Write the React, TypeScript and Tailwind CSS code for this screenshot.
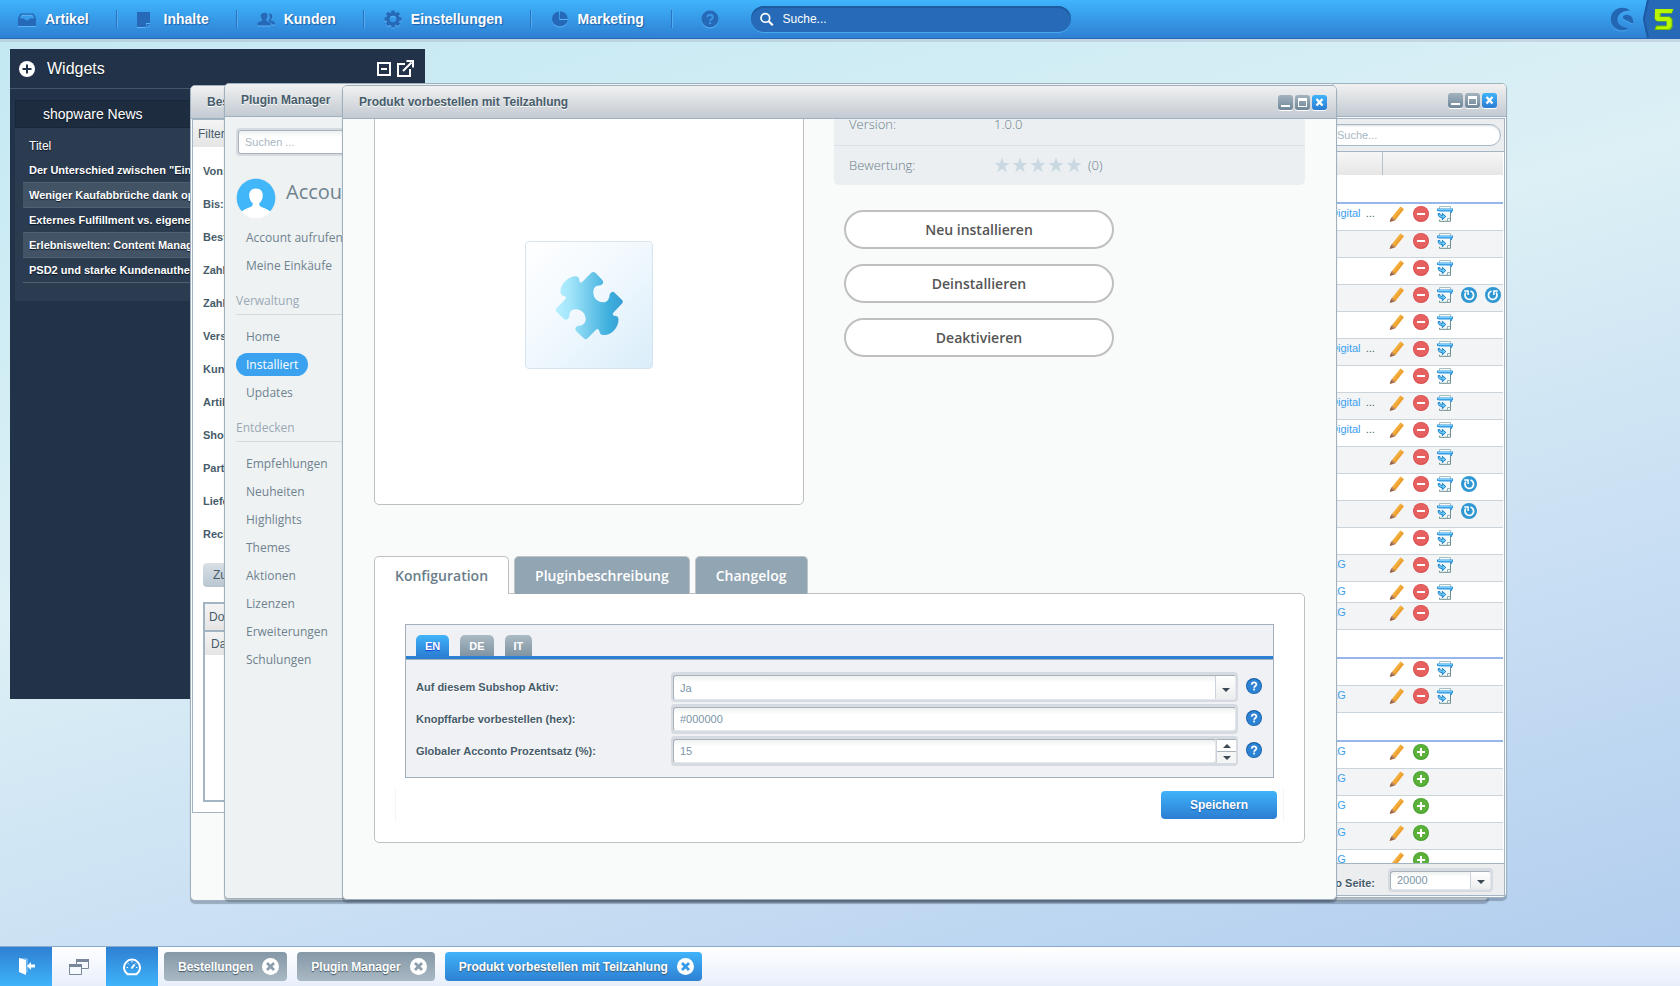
import React from 'react';

const titleShadow = '[text-shadow:0_1px_0_#ffffff]';

function Emboss({ children, className = '' }: { children: React.ReactNode; className?: string }) {
  return (
    <svg
      viewBox="0 0 18 18"
      aria-hidden="true"
      className={`h-[18px] w-[18px] shrink-0 text-[#2569b8] drop-shadow-[0_1px_0_#5cb5f5] ${className}`}
    >
      {children}
    </svg>
  );
}

const InboxIcon = () => (
  <Emboss>
    <path
      fill="currentColor"
      fillRule="evenodd"
      d="M2.500 3.500h13L18 8v8H0V8l2.500-4.500Zm1.200 1.200L1.800 8.400h4.600c.2 1.200 1.200 1.900 2.600 1.900s2.400-.7 2.600-1.900h4.600l-1.900-3.700H3.700Z"
    />
  </Emboss>
);

const PageIcon = () => (
  <Emboss>
    <path fill="currentColor" d="M0 2h13v11H9v4H0Z" />
    <path fill="currentColor" d="M10 14h3l-3 3Z" />
  </Emboss>
);

const UsersIcon = () => (
  <Emboss>
    <path
      fill="currentColor"
      d="M12.500 3.500c2 0 2.900 1.300 2.900 2.900 0 1.300-.6 2.500-1.200 3.100v1l3 1.300c.6.3.8.9.8 1.700v.9h-3.300c-.1-1.300-.6-1.900-1.700-2.400l-1.800-.9c1-1.200 1.500-2.500 1.500-4.200 0-1.400-.4-2.300-1.200-3.200.3-.1.600-.2 1-.2Z"
    />
    <path
      fill="currentColor"
      d="M7.500 2.800c2.200 0 3.200 1.500 3.200 3.300 0 1.500-.7 2.900-1.400 3.500v1.200l3.500 1.500c.8.4 1 1 1 1.900v1.300H.300v-1.300c0-.9.300-1.500 1-1.900l3.600-1.500V9.600C4.300 9 3.600 7.600 3.600 6.100c0-1.800 1.700-3.300 3.900-3.300Z"
    />
  </Emboss>
);

const teeth = [0, 45, 90, 135, 180, 225, 270, 315];

const GearIcon = () => (
  <Emboss>
    <circle cx="9" cy="9" r="5" fill="none" stroke="currentColor" strokeWidth="3.400" />
    {teeth.map((a) => (
      <rect key={a} x="7.200" y="0.500" width="3.600" height="3.500" rx="0.500" fill="currentColor" transform={`rotate(${a} 9 9)`} />
    ))}
  </Emboss>
);

const PieIcon = () => (
  <Emboss>
    <path fill="currentColor" d="M8 1.500v8.500h8.800A8 7.500 0 1 1 8 1.500Z" />
    <path fill="currentColor" d="M9 1.200a8 8 0 0 1 7.700 7.800H9Z" />
  </Emboss>
);

const nav = [
  { label: 'Artikel', icon: <InboxIcon /> },
  { label: 'Inhalte', icon: <PageIcon /> },
  { label: 'Kunden', icon: <UsersIcon /> },
  { label: 'Einstellungen', icon: <GearIcon /> },
  { label: 'Marketing', icon: <PieIcon /> },
];

function Header() {
  return (
    <header className="relative z-10 flex h-[39px] shrink-0 items-stretch border-b border-[#2767b4] bg-linear-to-b from-[#40b4fc] to-[#2e80d3] shadow-[0_3px_0_rgba(160,170,190,0.350)]">
      <nav className="flex items-center" aria-label="Hauptmenü">
        {nav.map((item) => (
          <React.Fragment key={item.label}>
            <button
              type="button"
              className="flex h-[38px] items-center gap-[9px] pr-[27px] pl-5 text-[14px] leading-5 font-bold text-white [text-shadow:1px_1px_1px_#1f5ea8] first:pl-[18px]"
            >
              {item.icon}
              {item.label}
            </button>
            <span className="h-[18px] w-px bg-[#2a73c0] shadow-[1px_0_0_#52acf0]" />
          </React.Fragment>
        ))}
      </nav>
      <button type="button" aria-label="Hilfe" className="flex items-center pr-8 pl-[29px]">
        <Emboss>
          <circle cx="9" cy="9" r="8.500" fill="currentColor" />
          <path d="M6.400 7.200c0-3.400 5.400-3.200 5.400 0 0 2-2.700 2-2.700 3.900" fill="none" stroke="#3c97e6" strokeWidth="2" />
          <rect x="8" y="12.200" width="2.200" height="2" fill="#3c97e6" />
        </Emboss>
      </button>
      <label className="my-[6px] flex w-[320px] items-center gap-[9px] rounded-full bg-[#276bb8] pl-[9px] shadow-[inset_0_2px_1px_#1f5a9e,0_1px_0_#4ba6ef]">
        <svg viewBox="0 0 15 15" className="h-[15px] w-[15px]" fill="none" stroke="#fff" strokeWidth="1.800" aria-hidden="true">
          <circle cx="5.800" cy="5.800" r="4.700" />
          <path d="m9.200 9.200 4.600 4.600" strokeWidth="2.400" />
        </svg>
        <input
          aria-label="Suche"
          placeholder="Suche..."
          className="w-full bg-transparent pr-4 text-[12px] leading-4 text-white outline-none placeholder:text-white placeholder:opacity-100"
        />
      </label>
      <div className="ml-auto flex items-center">
        <svg viewBox="0 0 24 24" className="mr-2 h-6 w-6 drop-shadow-[0_1px_0_#4ba6ef]" aria-hidden="true">
          <path
            fill="#2366b3"
            d="M20 3.500C17.500 1.500 15 .800 12 .800 5.500.800.800 6 .800 12.200c0 6.300 5 11.200 11.200 11.200 2.500 0 5-.7 6.500-2.200-4.500-.5-10.800-2.700-11-8.200C7.300 7.500 12.500 3.500 20 3.500Z"
          />
          <path fill="#2366b3" d="M13 10.500c0-2.200 2.500-3 5-2.500 3.500.6 5.500 3.500 5.300 8.200-3-.2-4.500-1.700-6.800-2.800C14.500 12.500 13 12 13 10.500Z" />
        </svg>
        <svg viewBox="0 0 38 38" className="h-[38px] w-[38px]" role="img" aria-label="5">
          <path fill="#2569b7" d="M5 0h33v38H5L1 19Z" />
          <path fill="#1d5aa3" d="M5 0h2L3 19l4 19H5L1 19Z" />
          <path fill="#74bf00" d="M13 9h18.500L30 13.500H19v3h9L30.500 19v8.500L28 30H12.500l1.500-4.500h10.500v-4H15L12.500 19Z" />
          <path fill="#b8f600" d="M13 9h18l-1.500 4H17.500v4h9.500L29.500 19.500V26L27 29H14l.8-2.500h10V21H15l-2-2Z" />
        </svg>
      </div>
    </header>
  );
}

const news = [
  'Der Unterschied zwischen "Einkauf" und Erlebnis',
  'Weniger Kaufabbrüche dank optimiertem Checkout',
  'Externes Fulfillment vs. eigene Logistik',
  'Erlebniswelten: Content Management im Shop',
  'PSD2 und starke Kundenauthentifizierung',
];

function Widgets() {
  return (
    <section className="absolute top-[10px] left-[10px] h-[650px] w-[415px] bg-[#223349] text-white [text-shadow:0_1px_1px_#0d1622]">
      <div className="flex h-10 items-center border-b border-[#44556a] pr-[11px] pl-[9px]">
        <svg viewBox="0 0 16 16" className="h-4 w-4" aria-hidden="true">
          <circle cx="8" cy="8" r="8" fill="#fff" />
          <path d="M8 3.500v9M3.500 8h9" stroke="#223349" strokeWidth="2" />
        </svg>
        <h2 className="ml-3 flex-1 text-[16px] leading-5">Widgets</h2>
        <button type="button" aria-label="Minimieren">
          <svg viewBox="0 0 14 14" className="h-[14px] w-[14px]" fill="none" stroke="#fff" strokeWidth="2">
            <path d="M1 1h12v12H1ZM4 7h6" />
          </svg>
        </button>
        <button type="button" aria-label="Ablösen" className="ml-[6px]">
          <svg viewBox="0 0 17 17" className="h-[17px] w-[17px]" fill="none" stroke="#fff" strokeWidth="2">
            <path d="M8 4H1v12h12V9" />
            <path d="m6 11 8.500-8.500M9.500 1H16v6.500" />
          </svg>
        </button>
      </div>
      <div className="mx-[5px] mt-[11px] bg-[#2b3c51] pb-[18px]">
        <h3 className="h-7 border border-[#17263a] bg-[#1d2c3f] pl-[27px] text-[14px] leading-[26px]">shopware News</h3>
        <table className="ml-2 w-[389px] table-fixed border-separate border-spacing-0 text-left">
          <thead>
            <tr>
              <th className="h-[30px] pt-[6px] pl-[6px] text-[12px] leading-4 font-normal">Titel</th>
            </tr>
          </thead>
          <tbody>
            {news.map((n) => (
              <tr key={n} className="even:bg-[#435366]">
                <td className="h-[25px] truncate border-b border-[#516174] pl-[6px] text-[11px] leading-4 font-bold">{n}</td>
              </tr>
            ))}
          </tbody>
        </table>
      </div>
    </section>
  );
}

function WindowButtons() {
  const grey =
    'h-[15px] w-[15px] rounded-[3px] bg-linear-to-b from-[#a3b3be] to-[#70889a] shadow-[0_1px_0_#ffffff]';
  return (
    <div className="flex gap-[2px]">
      <button type="button" aria-label="Fenster minimieren" className={grey}>
        <svg viewBox="0 0 15 15">
          <path d="M3 10h9v2H3Z" fill="#fff" />
        </svg>
      </button>
      <button type="button" aria-label="Fenster maximieren" className={grey}>
        <svg viewBox="0 0 15 15">
          <path fill="#fff" fillRule="evenodd" d="M3 3h9v9H3Zm1 3v5h7V6Z" />
        </svg>
      </button>
      <button
        type="button"
        aria-label="Fenster schließen"
        className="h-[15px] w-[15px] rounded-[3px] bg-linear-to-b from-[#40b3fb] to-[#2b7cd0] shadow-[0_1px_0_#ffffff]"
      >
        <svg viewBox="0 0 15 15">
          <path d="m4.500 4 6 6.500m0-6.500-6 6.500" stroke="#fff" strokeWidth="2.400" />
        </svg>
      </button>
    </div>
  );
}

function WindowFrame({ title, place, children }: { title: string; place: string; children: React.ReactNode }) {
  return (
    <section
      className={`absolute flex flex-col overflow-hidden rounded-[5px] border border-[#9fb1be] bg-[#f9fbfb] shadow-[0_3px_1px_rgba(60,75,95,0.350)] ${place}`}
    >
      <div className="flex h-[33px] shrink-0 items-center justify-between border-b border-[#9fb1be] bg-linear-to-b from-[#f1f1f1] to-[#c3cad2] pr-[9px] pl-4">
        <h2 className={`text-[12px] leading-4 font-bold text-[#475c6a] ${titleShadow}`}>{title}</h2>
        <WindowButtons />
      </div>
      {children}
    </section>
  );
}

const filters = [
  'Von:',
  'Bis:',
  'Bestellstatus:',
  'Zahlstatus:',
  'Zahlungsart:',
  'Versandart:',
  'Kundengruppe:',
  'Artikel:',
  'Shop:',
  'Partner:',
  'Lieferland:',
  'Rechnungsland:',
];

function FilterWindow() {
  return (
    <WindowFrame title="Bestellungen" place="top-[46px] right-[191px] bottom-[45px] left-[190px]">
      <div className="ml-px w-[250px] border border-[#a3b4c2] bg-white pb-[10px] text-[#475c6a]">
        <h3 className="h-[27px] bg-linear-to-b from-[#f4f4f4] to-[#e5e5e6] pl-[5px] text-[12px] leading-[28px]">Filter</h3>
        <ul className="mt-2 px-[10px] text-[11px] leading-[33px] font-bold">
          {filters.map((f) => (
            <li key={f}>{f}</li>
          ))}
        </ul>
        <div className="px-[10px] text-[12px]">
          <button
            type="button"
            className="mt-3 block h-6 rounded-[4px] bg-linear-to-b from-[#d9e0e6] to-[#b9c6d0] px-[10px] text-[12px] leading-4"
          >
            Zurücksetzen
          </button>
          <div className="mt-[15px] h-[200px] border-2 border-[#a3b4c2]">
            <h4 className="h-[28px] border-b-2 border-[#a3b4c2] bg-linear-to-b from-[#f4f4f4] to-[#e5e5e6] pl-1 leading-[26px]">
              Dokumente
            </h4>
            <div className="h-[23px] bg-linear-to-b from-[#f4f4f4] to-[#e5e5e6] pl-[6px] leading-[25px]">Datum</div>
          </div>
        </div>
      </div>
    </WindowFrame>
  );
}

const PencilIcon = () => (
  <svg viewBox="0 0 16 16" className="h-4 w-4">
    <path fill="#eea02c" d="m11.500.500 3.500 2.800L6.500 14 3 11Z" />
    <path fill="#f6b84e" d="m11.500.500 1.700 1.400-8.400 10.500L3 11Z" opacity=".6" />
    <path fill="#946047" d="M3 11l3.500 3-3 1.300L.700 16 1.500 13Z" />
    <path fill="#c98c5b" d="m3 11 3.500 3-1.600.7L2.200 12.300Z" />
  </svg>
);

const MinusIcon = () => (
  <svg viewBox="0 0 16 16" className="h-4 w-4">
    <circle cx="8" cy="8" r="8" fill="#d94a4c" />
    <circle cx="8" cy="7.700" r="7.200" fill="#e5605f" />
    <rect x="4" y="7" width="8" height="2" fill="#fff" />
  </svg>
);

const PlusIcon = () => (
  <svg viewBox="0 0 16 16" className="h-4 w-4">
    <circle cx="8" cy="8" r="8" fill="#43a02c" />
    <circle cx="8" cy="7.700" r="7" fill="#5cb13a" />
    <path d="M8 4v8M4 8h8" stroke="#fff" strokeWidth="2" />
  </svg>
);

const PrinterIcon = () => (
  <svg viewBox="0 0 16 16" className="h-4 w-4">
    <path d="M2.500 3V.500h11V3" fill="#f6fbfa" stroke="#a9c0c1" strokeWidth="1" />
    <path d="M3 5.500h10.500v9.800H3Z" fill="#f4f9f9" />
    <path d="M13.500 5.500v9.800H2.500v-1.500" fill="none" stroke="#6f8f90" strokeWidth="1" />
    <path d="M10.500 15v-2.500h3" fill="#fff" stroke="#7c9b9c" strokeWidth=".8" />
    <path d="M0 2.500h16v2.700h-1V7h-1.500V5.500H1.500V5H0Z" fill="#2f96e4" />
    <path d="M1 3h14v1.200H1Z" fill="#79cefb" />
    <path d="M1.200 7.500h1.600c.2 1.600.8 2.100 2.500 2.100V7.300L8.800 10.500 5.300 13.700v-2.200C2.500 11.500 1 10.500 1.200 7.500Z" fill="#66ccfa" stroke="#1f7fc6" strokeWidth="1" />
  </svg>
);

const TurnIcon = ({ flip = false }: { flip?: boolean }) => (
  <svg viewBox="0 0 16 16" className={flip ? 'h-4 w-4 -scale-x-100' : 'h-4 w-4'}>
    <circle cx="8" cy="8" r="8" fill="#2f98d2" />
    <path d="M9.500 4a4.300 4.300 0 1 1-4.700 1.600" fill="none" stroke="#fff" strokeWidth="1.700" />
    <path d="M3.200 3.900h3.900v4" fill="none" stroke="#fff" strokeWidth="1.500" />
  </svg>
);

const icons: Record<string, { label: string; el: React.ReactNode }> = {
  e: { label: 'Bearbeiten', el: <PencilIcon /> },
  m: { label: 'Löschen', el: <MinusIcon /> },
  a: { label: 'Hinzufügen', el: <PlusIcon /> },
  p: { label: 'Drucken', el: <PrinterIcon /> },
  u: { label: 'Zurück', el: <TurnIcon /> },
  r: { label: 'Wiederholen', el: <TurnIcon flip /> },
};

type Row = [string, string];

const groups: Row[][] = [
  [
    ['Digital', 'emp'],
    ['', 'emp'],
    ['', 'emp'],
    ['', 'empur'],
    ['', 'emp'],
    ['Digital', 'emp'],
    ['', 'emp'],
    ['Digital', 'emp'],
    ['Digital', 'emp'],
    ['', 'emp'],
    ['', 'empu'],
    ['', 'empu'],
    ['', 'emp'],
    ['AG', 'emp'],
    ['AG', 'emp'],
    ['AG', 'em'],
  ],
  [
    ['', 'emp'],
    ['AG', 'emp'],
  ],
  [
    ['AG', 'ea'],
    ['AG', 'ea'],
    ['AG', 'ea'],
    ['AG', 'ea'],
    ['AG', 'ea'],
  ],
];

function OrdersWindow() {
  return (
    <WindowFrame title="" place="top-[44px] right-[173px] bottom-[48px] left-[345px]">
      <div className="m-px flex min-h-0 flex-1 flex-col border border-[#a3b4c2] bg-white">
        <div className="flex h-[33px] shrink-0 items-center justify-end border-b border-[#a3b4c2] bg-[#ebedef] pr-[3px]">
          <input
            aria-label="Bestellungen durchsuchen"
            placeholder="Suche..."
            className="h-[22px] w-[180px] rounded-full border border-[#a9b8c5] bg-white pl-[15px] text-[11px] leading-4 text-[#7f98ab] shadow-[inset_0_1px_2px_#d8dde2] outline-none placeholder:text-[#a9b7c3]"
          />
        </div>
        <div className="min-h-0 flex-1 overflow-hidden pr-px">
          <table className="w-full table-fixed border-separate border-spacing-0">
            <colgroup>
              <col />
              <col className="w-[60px]" />
              <col className="w-[120px]" />
            </colgroup>
            <thead>
              <tr className="bg-linear-to-b from-[#f6f6f6] to-[#e6e6e7]">
                <th className="h-[23px] p-0" aria-label="Bestellung" />
                <th className="border-r border-[#b9c1c8] p-0" aria-label="Kunde" />
                <th className="p-0" aria-label="Aktionen" />
              </tr>
            </thead>
            {groups.map((rows, g) => (
              <tbody key={g}>
                <tr>
                  <td colSpan={3} className="h-[29px] border-b-2 border-[#98b7e8] p-0" />
                </tr>
                {rows.map(([name, acts], i) => {
                  const short = g === 0 && i === 14;
                  return (
                    <tr key={i} className={i % 2 ? 'bg-[#f3f4f6]' : 'bg-white'}>
                      <td className={`border-b border-[#cbd3db] p-0 ${short ? 'h-[21px]' : 'h-[27px]'}`} />
                      <td className="border-b border-[#cbd3db] pt-px pl-[7px] align-top text-[11px] leading-4 whitespace-nowrap text-[#3ba0ee]">
                        {name}
                        {name === 'Digital' && <span className="ml-[2px] text-[#475c6a]"> ...</span>}
                      </td>
                      <td className="border-b border-[#cbd3db] p-0 pt-[2px] pl-[6px] align-top">
                        <div className="flex gap-2">
                          {acts.split('').map((a) => (
                            <button key={a} type="button" aria-label={icons[a].label} className="h-4 w-4">
                              {icons[a].el}
                            </button>
                          ))}
                        </div>
                      </td>
                    </tr>
                  );
                })}
              </tbody>
            ))}
          </table>
        </div>
        <div className="flex h-[32px] shrink-0 items-center justify-end border-t border-[#a3b4c2] bg-[#ebedef] pr-[11px]">
          <label htmlFor="page-size" className={`mr-[13px] pt-[6px] text-[11px] leading-4 font-bold text-[#475c6a] ${titleShadow}`}>
            Einträge pro Seite:
          </label>
          <SelectBox id="page-size" value="20000" frame="w-[105px] h-[24px]" />
        </div>
      </div>
    </WindowFrame>
  );
}

function SelectBox({ id, value, frame }: { id: string; value: string; frame: string }) {
  return (
    <div className={`flex rounded-[4px] bg-[#d6dbe2] px-[2px] pt-[3px] pb-[2px] ${frame}`}>
      <div className="relative flex flex-1 overflow-hidden rounded-[3px] border border-[#a7b2bb] border-r-[#e4e8ec] border-b-[#e4e8ec] bg-linear-to-b from-[#eef1f1] to-white to-30%">
        <select
          id={id}
          defaultValue={value}
          className="w-full appearance-none bg-transparent pr-6 pl-[6px] text-[11px] leading-4 text-[#7b95a8] outline-none"
        >
          <option>{value}</option>
        </select>
        <span className="pointer-events-none absolute inset-y-0 right-0 flex w-[20px] items-center justify-center border-l border-[#ccd3da] bg-linear-to-b from-white to-[#eceded]">
          <span className="mt-1 border-x-4 border-t-4 border-x-transparent border-t-[#3c4a55]" />
        </span>
      </div>
    </div>
  );
}

function MenuLink({ children, active = false }: { children: string; active?: boolean }) {
  return (
    <li className="flex h-7 items-center">
      <a
        href="#"
        className={
          active
            ? 'rounded-full bg-[#3aa2ef] px-[10px] py-[2px] text-white'
            : 'px-[10px] text-[#6f828f]'
        }
      >
        {children}
      </a>
    </li>
  );
}

function PluginManagerWindow() {
  const heading = 'mt-[9px] h-[27px] border-b border-[#d4dade] leading-[26px] text-[#9aa9b5]';
  return (
    <WindowFrame title="Plugin Manager" place="top-[44px] right-[345px] bottom-[47px] left-[224px]">
      <nav
        aria-label="Plugin Manager"
        className="w-[210px] flex-1 bg-[#eef2f3] pt-[11px] pl-[11px] font-['Open_Sans',sans-serif] text-[12px] leading-[19px] whitespace-nowrap"
      >
        <div className="mr-[10px] flex h-7 rounded-[4px] bg-[#d6dbe2] p-[2px]">
          <input
            aria-label="Plugins suchen"
            placeholder="Suchen ..."
            className="w-full rounded-[3px] border border-[#a7b2bb] bg-linear-to-b from-[#eef1f1] to-white to-30% pl-[6px] font-['Liberation_Sans',Arial,sans-serif] text-[11px] leading-4 outline-none placeholder:text-[#a9b7c3]"
          />
        </div>
        <div className="mt-[22px] flex h-10 items-center gap-[10px]">
          <svg viewBox="0 0 40 40" className="h-10 w-10" aria-hidden="true">
            <circle cx="20" cy="20" r="20" fill="#e4e8ea" />
            <circle cx="20" cy="20" r="19.300" fill="#41b7fa" />
            <path
              fill="#fff"
              d="M20 10.500c4.500 0 6.800 2.800 6.800 7 0 3.500-1.800 6.500-3.600 7.800 0 3.500 2 3.700 4.800 4.700 3.500 1.200 5.500 2.500 6.500 4A19.300 19.300 0 0 1 5.500 34c1-1.500 3-2.800 6.500-4 2.800-1 4.800-1.200 4.800-4.700-1.800-1.300-3.600-4.300-3.600-7.800 0-4.200 2.300-7 6.800-7Z"
            />
          </svg>
          <span className="pb-3 text-[20px] leading-7 text-[#6f828f]">Account</span>
        </div>
        <ul className="mt-[5px]">
          <MenuLink>Account aufrufen</MenuLink>
          <MenuLink>Meine Einkäufe</MenuLink>
        </ul>
        <h3 className={heading}>Verwaltung</h3>
        <ul className="mt-[7px]">
          <MenuLink>Home</MenuLink>
          <MenuLink active>Installiert</MenuLink>
          <MenuLink>Updates</MenuLink>
        </ul>
        <h3 className={heading}>Entdecken</h3>
        <ul className="mt-[7px]">
          <MenuLink>Empfehlungen</MenuLink>
          <MenuLink>Neuheiten</MenuLink>
          <MenuLink>Highlights</MenuLink>
          <MenuLink>Themes</MenuLink>
          <MenuLink>Aktionen</MenuLink>
          <MenuLink>Lizenzen</MenuLink>
          <MenuLink>Erweiterungen</MenuLink>
          <MenuLink>Schulungen</MenuLink>
        </ul>
      </nav>
    </WindowFrame>
  );
}

function PuzzleTile() {
  return (
    <div className="flex h-32 w-32 items-center justify-center rounded-[4px] border border-[#d7e4ee] bg-linear-to-br from-white via-[#f0f8fe] to-[#d9edf9]">
      <svg viewBox="164 150 207 208" className="h-[69px] w-[69px]" aria-hidden="true">
        <defs>
          <linearGradient id="puzzle" x1="0" x2="1">
            <stop offset="0" stopColor="#b4efff" />
            <stop offset="0.200" stopColor="#a5e6fa" />
            <stop offset="0.800" stopColor="#3caedd" />
            <stop offset="1" stopColor="#389fd3" />
          </linearGradient>
        </defs>
        <path
          fill="url(#puzzle)"
          d="M272 156Q279 150 286 156L306 177Q312 184 306 190Q302 194 296 194C284 194 279 203 279 215C279 232 292 244 308 244C322 244 327 234 328 222Q329 214 336 213Q340 212 344 216L365 237Q371 243 365 249L340 275Q335 281 341 285C350 285 355 288 355 297C355 320 335 343 312 343C301 343 298 338 297 330Q294 321 287 327L262 353Q256 359 250 353L229 333Q222 326 227 319Q231 315 237 315C250 314 256 306 256 295C256 278 243 265 226 265C213 265 207 272 207 286Q206 294 199 296Q194 298 190 294L168 273Q163 267 168 262L194 236Q200 230 193 226C183 224 180 219 180 210C180 190 205 166 225 166C234 166 237 172 237 180Q239 188 247 182Z"
        />
      </svg>
    </div>
  );
}

function HelpDot({ label }: { label: string }) {
  return (
    <button type="button" aria-label={`Hilfe zu ${label}`} className="mb-[3px] ml-2 h-4 w-4 shrink-0">
      <svg viewBox="0 0 16 16">
        <circle cx="8" cy="8" r="8" fill="#1d64ab" />
        <circle cx="8" cy="8.300" r="7" fill="#2d82d4" />
        <path d="M5.800 6.700c0-3 4.600-2.900 4.600-.2 0 1.700-2.300 1.700-2.300 3.200" fill="none" stroke="#fff" strokeWidth="1.700" />
        <rect x="7.200" y="10.600" width="1.800" height="1.700" fill="#fff" />
      </svg>
    </button>
  );
}

function Field({ id, label, children }: { id: string; label: string; children: React.ReactNode }) {
  return (
    <div className="flex h-[30px] items-center">
      <label htmlFor={id} className={`w-[255px] shrink-0 text-[11px] leading-4 font-bold text-[#475c6a] ${titleShadow}`}>
        {label}
      </label>
      {children}
      <HelpDot label={label} />
    </div>
  );
}

const inputFrame = 'flex h-[30px] flex-1 rounded-[4px] bg-[#d6dbe2] px-[2px] py-[3px]';
const inputBox =
  'w-full rounded-[3px] border border-[#a7b2bb] border-r-[#e4e8ec] border-b-[#e4e8ec] bg-linear-to-b from-[#eef1f1] to-white to-30% pl-[6px] text-[11px] leading-4 text-[#7b95a8] outline-none';

function ConfigForm() {
  const greyTab = 'h-[21px] rounded-t-[5px] bg-linear-to-b from-[#abbac4] to-[#8094a3] px-[9px] pt-px';
  return (
    <form className="rounded-[5px] rounded-tl-none border border-[#c0c0c0] bg-white px-[30px] pt-[30px] pb-5">
      <div className="border border-[#a0b0bc] bg-[#f0f1f4]">
        <div
          role="tablist"
          className="flex gap-[11px] border-b-3 border-[#2c80d3] px-[10px] pt-[10px] text-[11px] leading-5 font-bold text-white [text-shadow:0_1px_1px_#4f6678]"
        >
          <button
            type="button"
            role="tab"
            className="h-[21px] rounded-t-[5px] bg-linear-to-b from-[#40b3fb] to-[#2c80d3] px-[9px] pt-px [text-shadow:0_1px_1px_#1530d8]"
          >
            EN
          </button>
          <button type="button" role="tab" className={greyTab}>
            DE
          </button>
          <button type="button" role="tab" className={greyTab}>
            IT
          </button>
        </div>
        <div className="flex flex-col gap-[2px] border-t border-[#a0b0bc] pt-3 pr-[11px] pb-[11px] pl-[10px]">
          <Field id="active" label="Auf diesem Subshop Aktiv:">
            <SelectBox id="active" value="Ja" frame="h-[30px] flex-1" />
          </Field>
          <Field id="color" label="Knopffarbe vorbestellen (hex):">
            <div className={inputFrame}>
              <input id="color" defaultValue="#000000" className={inputBox} />
            </div>
          </Field>
          <Field id="percent" label="Globaler Acconto Prozentsatz (%):">
            <div className={inputFrame}>
              <input id="percent" defaultValue="15" className={inputBox} />
              <span className="flex w-[20px] shrink-0 flex-col border-l border-[#ccd3da] bg-[#a7b2bb]">
                <button type="button" aria-label="Erhöhen" className="mt-px flex flex-1 items-center justify-center bg-white">
                  <span className="border-x-4 border-b-4 border-x-transparent border-b-[#3c4a55]" />
                </button>
                <button type="button" aria-label="Verringern" className="mt-px flex flex-1 items-center justify-center bg-[#f4f5f5]">
                  <span className="border-x-4 border-t-4 border-x-transparent border-t-[#3c4a55]" />
                </button>
              </span>
            </div>
          </Field>
        </div>
      </div>
      <div className="-mx-[10px] mt-[10px] flex h-[34px] items-center justify-end border-x border-[#f3f4f4] pr-[6px]">
        <button
          type="button"
          className="h-7 w-[116px] rounded-[4px] bg-linear-to-b from-[#40b3fb] to-[#2c7dd1] text-[12px] leading-4 font-bold text-white [text-shadow:0_1px_1px_#1d5ba6]"
        >
          Speichern
        </button>
      </div>
    </form>
  );
}

function ProductWindow() {
  const pill =
    'h-[39px] w-[270px] rounded-full border-2 border-[#bfbfbf] bg-white text-[14px] leading-5 font-semibold text-[#555555]';
  const greyTab = 'h-[38px] rounded-t-[5px] border border-b-0 border-[#bfc3c6] bg-[#92a5b3] px-5 text-white';
  return (
    <WindowFrame title="Produkt vorbestellen mit Teilzahlung" place="top-[46px] right-[343px] bottom-[46px] left-[342px]">
      <div className="min-h-0 flex-1 overflow-hidden">
        <div className="-mt-[14px] px-[31px]">
          <div className="flex gap-[30px] font-['Open_Sans',sans-serif]">
            <div className="flex h-[400px] w-[430px] shrink-0 items-center justify-center rounded-[5px] border border-[#bfbfbf] bg-white">
              <PuzzleTile />
            </div>
            <div className="flex-1">
              <dl className="rounded-b-[5px] bg-[#ebeff2] text-[13px] leading-5 font-light text-[#6a7d8a]">
                <div className="flex h-[41px] items-center border-b border-[#dbe3e8] px-[15px] pb-[2px]">
                  <dt className="w-[145px]">Version:</dt>
                  <dd>1.0.0</dd>
                </div>
                <div className="flex h-[39px] items-center px-[15px] pb-[2px]">
                  <dt className="w-[145px]">Bewertung:</dt>
                  <dd className="flex items-center gap-[2px]">
                    {[1, 2, 3, 4, 5].map((s) => (
                      <svg key={s} viewBox="0 0 16 16" className="h-4 w-4" aria-hidden="true">
                        <path fill="#c9d8e1" d="m8 .500 2 5.500h5.500L11 9.600l1.800 5.700L8 11.800l-4.800 3.500L5 9.600.500 6H6Z" />
                      </svg>
                    ))}
                    <span className="ml-1">(0)</span>
                  </dd>
                </div>
              </dl>
              <div className="mt-[25px] ml-[10px] flex flex-col gap-[15px]">
                <button type="button" className={pill}>
                  Neu installieren
                </button>
                <button type="button" className={pill}>
                  Deinstallieren
                </button>
                <button type="button" className={pill}>
                  Deaktivieren
                </button>
              </div>
            </div>
          </div>
          <div
            role="tablist"
            className="relative mt-[51px] -mb-px flex items-start gap-[5px] font-['Open_Sans',sans-serif] text-[14px] leading-5 font-semibold"
          >
            <button
              type="button"
              role="tab"
              className="h-[38px] rounded-t-[5px] border border-b-0 border-[#bfbfbf] bg-white px-5 text-[#6a7d8a]"
            >
              Konfiguration
            </button>
            <button type="button" role="tab" className={greyTab}>
              Pluginbeschreibung
            </button>
            <button type="button" role="tab" className={greyTab}>
              Changelog
            </button>
          </div>
          <ConfigForm />
        </div>
      </div>
    </WindowFrame>
  );
}

function Task({ label, active = false }: { label: string; active?: boolean }) {
  return (
    <button
      type="button"
      className={`flex h-[29px] items-center gap-[9px] rounded-[4px] bg-linear-to-b pr-2 pl-[14px] text-[12px] leading-4 font-bold text-white [text-shadow:0_1px_1px_#3f5262] ${
        active ? 'from-[#40b3fb] to-[#2e80d3]' : 'from-[#8598a6] to-[#a9b9c4]'
      }`}
    >
      {label}
      <svg viewBox="0 0 17 17" className={`h-[17px] w-[17px] ${active ? 'text-[#379ae8]' : 'text-[#8d9fad]'}`} aria-hidden="true">
        <circle cx="8.500" cy="8.500" r="8.500" fill="#fff" />
        <path d="m5 5 7 7m0-7-7 7" stroke="currentColor" strokeWidth="2.800" />
      </svg>
    </button>
  );
}

function Taskbar() {
  const blue = 'flex w-[52px] items-center justify-center bg-linear-to-b from-[#2f80d2] to-[#3fb3fb]';
  return (
    <footer className="relative z-10 flex h-10 shrink-0 border-t border-[#8aa9cb] bg-linear-to-b from-white to-[#e8effb]">
      <button type="button" aria-label="Abmelden" className={blue}>
        <svg viewBox="0 0 17 17" className="h-[17px] w-[17px]">
          <path d="M2 1h7v13H7" fill="none" stroke="#9fd4fb" strokeWidth="1" />
          <path d="m1 0 7 2v15l-7-3Z" fill="#fff" />
          <path d="M9 8l4-4v2.500h4v3h-4V12Z" fill="#fff" />
        </svg>
      </button>
      <button type="button" aria-label="Fenster anordnen" className="ml-px flex w-[52px] items-center justify-center">
        <svg viewBox="0 0 20 16" className="h-4 w-5" fill="none" stroke="#78889a" strokeWidth="1">
          <path d="M7.500.500h12v9h-12Z" fill="#f6f9fd" />
          <path d="M7 1.500h13" strokeWidth="3" />
          <path d="M.500 5.500h12v10H.500Z" fill="#f6f9fd" />
          <path d="M0 6.500h13" strokeWidth="3" />
        </svg>
      </button>
      <button type="button" aria-label="Übersicht" className={`ml-px ${blue}`}>
        <svg viewBox="0 0 18 18" className="h-[18px] w-[18px]" fill="none" stroke="#fff">
          <path d="M4.500 16.200a8 8 0 1 1 9 0Z" strokeWidth="2" />
          <path d="m8.500 10.500 3-4" strokeWidth="2" />
          <path d="M9 3v1.500M3.500 9.500H5m8 0h1.500M4.900 5.300l1 1m7.200-1-1 1" strokeWidth="1" />
        </svg>
      </button>
      <div className="ml-[6px] flex items-center gap-[10px]">
        <Task label="Bestellungen" />
        <Task label="Plugin Manager" />
        <Task label="Produkt vorbestellen mit Teilzahlung" active />
      </div>
    </footer>
  );
}

export default function App() {
  return (
    <div className="flex h-screen flex-col overflow-hidden bg-[linear-gradient(164deg,#c2e8f3_0%,#dcf0f5_42%,#c8def3_70%,#b0ccee_100%)] font-['Liberation_Sans',Arial,sans-serif]">
      <Header />
      <main className="relative min-h-0 flex-1">
        <Widgets />
        <FilterWindow />
        <OrdersWindow />
        <PluginManagerWindow />
        <ProductWindow />
      </main>
      <Taskbar />
    </div>
  );
}
